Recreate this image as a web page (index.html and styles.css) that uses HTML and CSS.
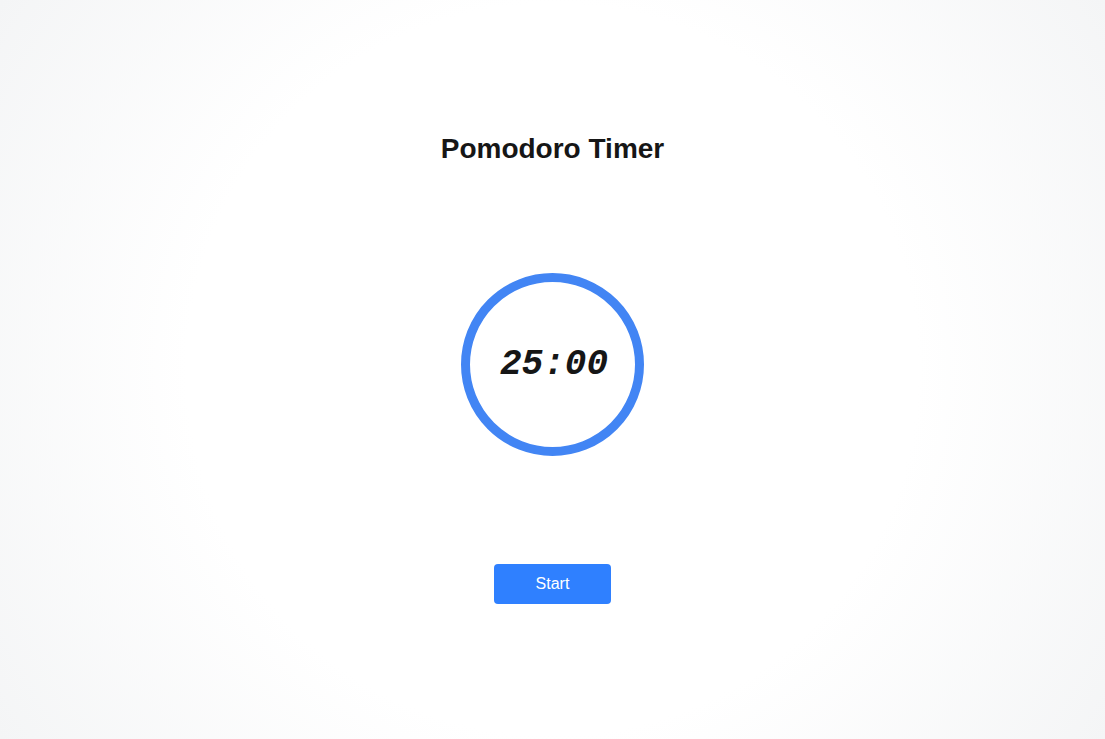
FILE: index.html
```html
<!DOCTYPE html>
<html>
<head>
    <title>Pomodoro Timer</title>
    <link rel="stylesheet" href="styles.css">
</head>
<body>
    <div class="container">
        <h1>Pomodoro Timer</h1>
        <div class="timer">
            <span id="time">25:00</span>
        </div>
        <button id="startButton">Start</button>
    </div>
</body>
</html>
```

FILE: styles.css
```css
html,
body {
    height: 100%;
}

body {
    font-family: "Liberation Sans", Arial, sans-serif;
    margin: 0;
    padding: 0;
    background: radial-gradient(circle at center, #ffffff 55%, #f4f5f6 100%);
}

.container {
    height: 100%;
    box-sizing: border-box;
    padding-bottom: 3px;
    display: flex;
    flex-direction: column;
    align-items: center;
    justify-content: center;
    gap: 108px;
}

h1 {
    font-size: 28px;
    line-height: 32px;
    font-weight: bold;
    color: #161616;
    margin: 0;
}

.timer {
    width: 183px;
    height: 183px;
    box-sizing: border-box;
    border: 9px solid #4285f4;
    border-radius: 50%;
    display: flex;
    align-items: center;
    justify-content: center;
}

#time {
    font-family: "Liberation Mono", "Courier New", monospace;
    font-size: 36px;
    font-weight: bold;
    font-style: italic;
    color: #161616;
    margin-left: 3px;
}

button {
    width: 117px;
    height: 40px;
    background: #2f80ff;
    color: white;
    font-family: "Liberation Sans", Arial, sans-serif;
    font-size: 16px;
    border: none;
    border-radius: 4px;
    cursor: pointer;
}
```
